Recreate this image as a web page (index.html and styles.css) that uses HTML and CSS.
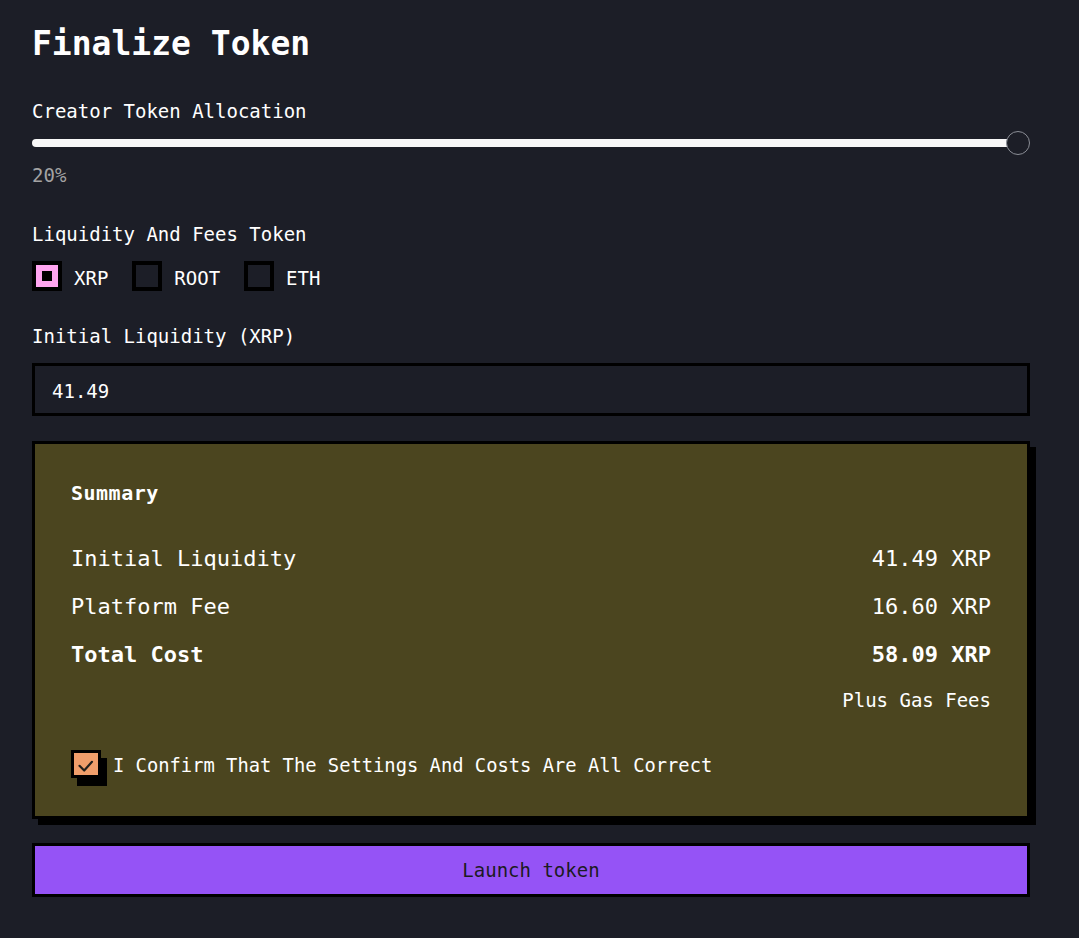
FILE: index.html
```html
<!DOCTYPE html>
<html lang="en">
<head>
<meta charset="utf-8">
<title>Finalize Token</title>
<link rel="stylesheet" href="styles.css">
</head>
<body>
<main class="page">
  <h1 class="title">Finalize Token</h1>

  <div class="label label-first">Creator Token Allocation</div>
  <div class="slider">
    <div class="track"></div>
    <div class="thumb"></div>
  </div>
  <div class="hint">20%</div>

  <div class="label label-gap">Liquidity And Fees Token</div>
  <div class="options">
    <div class="option">
      <span class="box box-on"><span class="dot"></span></span>
      <span class="option-text">XRP</span>
    </div>
    <div class="option">
      <span class="box"></span>
      <span class="option-text">ROOT</span>
    </div>
    <div class="option">
      <span class="box"></span>
      <span class="option-text">ETH</span>
    </div>
  </div>

  <div class="label label-gap2">Initial Liquidity (XRP)</div>
  <div class="input">41.49</div>

  <section class="summary">
    <h2 class="summary-title">Summary</h2>
    <div class="rows">
      <div class="row"><span>Initial Liquidity</span><span>41.49 XRP</span></div>
      <div class="row"><span>Platform Fee</span><span>16.60 XRP</span></div>
      <div class="row row-total"><span>Total Cost</span><span>58.09 XRP</span></div>
    </div>
    <div class="gas">Plus Gas Fees</div>
    <div class="confirm">
      <span class="check">
        <svg width="24" height="22" viewBox="0 0 24 22"><path d="M5.5 12.8 L10.2 17.5 L18 8.8" fill="none" stroke="#22201c" stroke-width="2.2" stroke-linecap="round" stroke-linejoin="round"/></svg>
      </span>
      <span class="confirm-text">I Confirm That The Settings And Costs Are All Correct</span>
    </div>
  </section>

  <button class="launch">Launch token</button>
</main>
</body>
</html>
```

FILE: styles.css
```css
* { box-sizing: border-box; }

html, body {
  margin: 0;
  background: #1c1e27;
}

body {
  color: #ffffff;
  font-family: "DejaVu Sans Mono", "Liberation Mono", monospace;
}

.page {
  display: flex;
  flex-direction: column;
  padding: 24px 49px 0 32px;
}

.title {
  margin: 0;
  font-size: 33px;
  line-height: 40px;
  font-weight: bold;
}

.label {
  font-size: 19px;
  line-height: 24px;
}

.label-first { margin-top: 35px; }
.label-gap { margin-top: 35px; }
.label-gap2 { margin-top: 33px; }

.slider {
  position: relative;
  margin-top: 8px;
  height: 24px;
  display: flex;
  align-items: center;
}

.track {
  flex: 1;
  height: 8px;
  margin-right: 12px;
  background: #f8f8f8;
  border-radius: 4px 0 0 4px;
}

.thumb {
  position: absolute;
  right: 0;
  top: 0;
  width: 24px;
  height: 24px;
  border-radius: 50%;
  border: 1.5px solid #8b8e96;
  background: #1c1e27;
}

.hint {
  margin-top: 8px;
  font-size: 19px;
  line-height: 24px;
  color: #a3a3a3;
}

.options {
  margin-top: 15px;
  display: flex;
  gap: 24px;
}

.option {
  display: flex;
  align-items: flex-start;
  gap: 12px;
}

.box {
  width: 30px;
  height: 30px;
  border: 4px solid #000;
  display: flex;
  align-items: center;
  justify-content: center;
}

.box-on { background: #ffa5f0; }

.dot {
  width: 10px;
  height: 10px;
  background: #000;
}

.option-text {
  margin-top: 5px;
  font-size: 19px;
  line-height: 24px;
}

.input {
  margin-top: 15px;
  height: 53px;
  border: 3px solid #000;
  padding: 2px 17px 0;
  display: flex;
  align-items: center;
  font-size: 19px;
  line-height: 24px;
}

.summary {
  margin-top: 25px;
  background: #4b451f;
  border: 3px solid #000;
  box-shadow: 6px 6px 0 #000;
  padding: 36px 36px 38px;
  display: flex;
  flex-direction: column;
}

.summary-title {
  margin: 0;
  font-size: 20px;
  line-height: 26px;
  font-weight: bold;
  letter-spacing: 0.5px;
}

.rows {
  margin-top: 39px;
  display: flex;
  flex-direction: column;
  gap: 20px;
}

.row {
  display: flex;
  justify-content: space-between;
  font-size: 22px;
  line-height: 28px;
}

.row-total { font-weight: bold; }

.gas {
  margin-top: 19px;
  align-self: flex-end;
  font-size: 19px;
  line-height: 24px;
}

.confirm {
  margin-top: 38px;
  display: flex;
  align-items: flex-start;
  gap: 12px;
}

.check {
  flex: none;
  width: 30px;
  height: 28px;
  border: 3px solid #000;
  background: #f09e6b;
  box-shadow: 6px 8px 0 #000;
  display: flex;
  align-items: center;
  justify-content: center;
}

.check svg { flex: none; display: block; }

.confirm-text {
  margin-top: 4px;
  font-size: 18.8px;
  line-height: 24px;
}

.launch {
  margin-top: 24px;
  height: 54px;
  border: 3px solid #000;
  background: #9553f6;
  color: #1c1b22;
  font-family: "DejaVu Sans Mono", "Liberation Mono", monospace;
  font-size: 19px;
  line-height: 24px;
  padding: 0;
  cursor: pointer;
}
```
